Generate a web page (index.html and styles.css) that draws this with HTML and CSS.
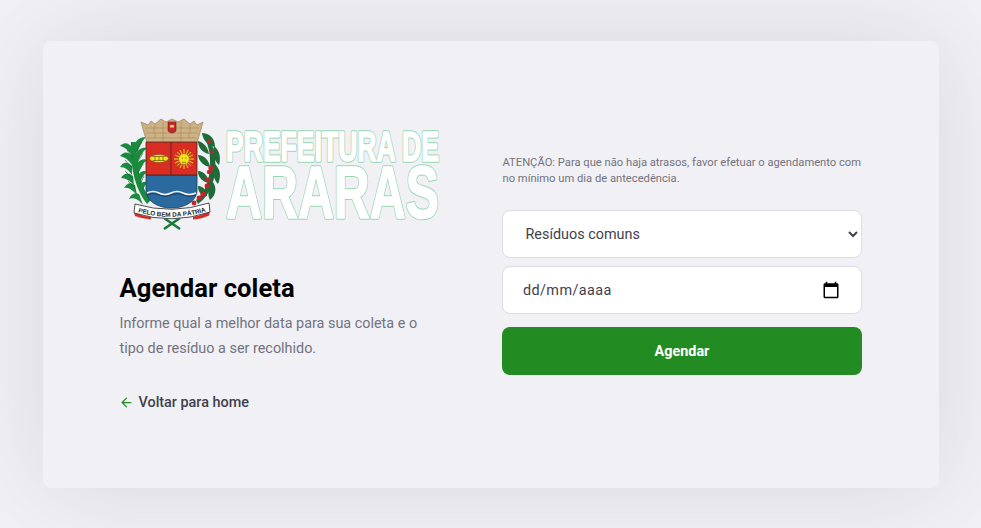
FILE: index.html
```html
<!DOCTYPE html>
<html lang="pt-BR">
<head>
<meta charset="utf-8">
<title>Agendar coleta</title>
<link rel="stylesheet" href="styles.css">
</head>
<body>
<main class="page">
  <div class="card">
    <section class="intro">
      <svg class="logo" viewBox="120 118 320 114" width="320" height="114" role="img" aria-label="Prefeitura de Araras">
        <defs>
          <text id="t1" class="wm wm-top" x="226" y="160.500" textLength="213" lengthAdjust="spacingAndGlyphs">PREFEITURA DE</text>
          <text id="t2" class="wm wm-big" x="226" y="218" textLength="213" lengthAdjust="spacingAndGlyphs">ARARAS</text>
          <path id="bannerCurve" d="M128 209 Q172 225 216 208"/>
        </defs>
        <use href="#t1" class="wm-out"/><use href="#t1" class="wm-in"/>
        <use href="#t2" class="wm-out"/><use href="#t2" class="wm-in"/>

        <!-- sugar cane -->
        <g class="cane">
          <path d="M147 204 C136 190 130 170 131 142 L136 142 C136 168 141 188 151 200Z"/>
          <path d="M133 148 C128 142 124 142 120 146 C125 147 129 151 132 156Z"/>
          <path d="M134 146 C136 140 140 137 146 137 C142 141 139 147 137 153Z"/>
          <path d="M132 156 C127 151 124 152 120 156 C125 157 129 160 132 165Z"/>
          <path d="M135 155 C138 149 142 147 147 148 C142 152 139 158 137 164Z"/>
          <path d="M132 166 C127 161 123 162 120 167 C125 167 129 170 132 175Z"/>
          <path d="M136 165 C139 160 143 158 147 160 C143 163 140 168 138 174Z"/>
          <path d="M133 176 C128 172 124 173 121 178 C126 178 130 181 134 185Z"/>
          <path d="M138 175 C141 171 144 170 147 172 C143 175 141 179 140 184Z"/>
          <path d="M135 185 C130 182 127 183 124 188 C129 187 133 191 137 195Z"/>
          <path d="M140 185 C143 181 145 181 147 183 C144 186 143 190 142 194Z"/>
          <path d="M139 194 C135 192 131 194 129 199 C134 197 139 200 143 205Z"/>
        </g>
        <path class="cane-light" d="M127 150L133 158M142 142L136 152M125 160L132 168M143 153L137 163M125 171L133 179M143 164L138 173M128 181L135 188M144 176L140 184"/>
        <!-- laurel -->
        <g class="laurel">
          <path d="M198 204 C211 195 217 178 215 156 C214 147 210 140 203 134 C207 142 210 150 210 160 C211 176 206 192 196 200Z"/>
          <path d="M202 133 C209 133 215 138 215 147 C209 146 203 141 202 133Z"/>
          <path d="M198 141 C203 142 208 147 209 154 C203 153 198 148 198 141Z"/>
          <path d="M214 146 C220 151 221 158 219 165 C214 161 212 153 214 146Z"/>
          <path d="M198 155 C204 155 209 160 210 167 C204 166 199 162 198 155Z"/>
          <path d="M215 164 C221 170 221 177 218 184 C213 179 212 171 215 164Z"/>
          <path d="M198 171 C204 171 208 176 209 183 C203 182 198 178 198 171Z"/>
          <path d="M213 182 C217 188 216 195 210 200 C207 195 208 187 213 182Z"/>
          <path d="M198 186 C203 186 206 190 207 196 C201 196 198 192 198 186Z"/>
        </g>
        <g class="berries">
          <circle cx="209" cy="142" r="2"/><circle cx="212" cy="152" r="1.800"/>
          <circle cx="211" cy="168" r="2.600"/><circle cx="209" cy="172" r="2.200"/>
          <circle cx="208" cy="180" r="2.400"/><circle cx="207" cy="186" r="2.400"/>
          <circle cx="203" cy="194" r="2.600"/><circle cx="199" cy="198" r="2.400"/>
          <circle cx="194" cy="203" r="2.400"/>
        </g>
        <!-- mural crown -->
        <path class="crown" d="M141 122 L148 125 L151 121 L155 124 L161 119 L166 122 L172 119 L178 122 L184 119 L190 124 L194 121 L197 125 L203 122 L197 143 L147 143Z"/>
        <path class="crown-lines" d="M145 128H199M146 133H198M147 138H197M155 124V128M163 122V143M181 122V143M190 124V128M154 128V133M190 128V133M155 133V138M189 133V138"/>
        <path class="mini-shield" d="M168 122H176V131Q172 135 168 131Z"/>
        <rect class="mini-gold" x="170" y="125" width="4" height="2.500"/>
        <!-- shield -->
        <path class="sh-blue" d="M146 175H197V190C197 201 185 208 171.500 208C158 208 146 201 146 190Z"/>
        <rect class="sh-red" x="146" y="142" width="51" height="33"/>
        <path class="sh-line" d="M171 142V175M146 142H197V175M146 142V175M146 175H197"/>
        <path class="sh-wave-dark" d="M147 195Q153 192 159 195T171 195T183 195T196 195"/>
        <path class="sh-wave" d="M147 193Q153 190 159 193T171 193T183 193T196 193"/>
        <!-- left charge -->
        <ellipse class="gold" cx="159" cy="158.500" rx="9.500" ry="4"/>
        <path class="gold-line" d="M152 156.500H166M152.500 160.500H165.500M155 156V161M159 156V161M163 156V161"/>
        <!-- sun -->
        <path class="sun-rays" d="M184 149V169M174 159H194M177 152L191 166M191 152L177 166M180 150L188 168M188 150L180 168M175 155L193 163M193 155L175 163"/>
        <circle class="gold" cx="184" cy="159" r="5.500"/>
        <path class="gold-line" d="M181.500 158H183M185 158H186.500M182 162Q184 163 186 162"/>
        <!-- stems -->
        <path class="stems" d="M164 229L180 218M180 229L164 218"/>
        <!-- banner -->
        <path class="ribbon-red" d="M134 212Q142 216 151 217L151 219.500Q142 219 135 216ZM210 211Q202 215 193 217L193 219.500Q202 219 209 215.500Z"/>
        <path class="banner" d="M135 204Q172 215 209 203L210 212Q172 225 134 213Z"/>
        <text class="banner-text"><textPath href="#bannerCurve" startOffset="50%">PELO BEM DA PÁTRIA</textPath></text>
      </svg>

      <h1 class="title">Agendar coleta</h1>
      <p class="lead">Informe qual a melhor data para sua coleta e o tipo de resíduo a ser recolhido.</p>
      <a class="back" href="#">
        <svg class="back-icon" viewBox="0 0 24 24" width="15" height="15"><path d="M19 12H5M12 19l-7-7 7-7"/></svg>
        <span>Voltar para home</span>
      </a>
    </section>

    <form class="schedule">
      <p class="notice">ATENÇÃO: Para que não haja atrasos, favor efetuar o agendamento com no mínimo um dia de antecedência.</p>
      <select class="field field-select">
        <option>Resíduos comuns</option>
      </select>
      <label class="field field-date">
        <input class="date-input" type="text" placeholder="dd/mm/aaaa">
        <svg class="date-icon" viewBox="0 0 24 24" width="18" height="18"><path d="M20 3h-1V1h-2v2H7V1H5v2H4c-1.100 0-2 .9-2 2v16c0 1.100.9 2 2 2h16c1.100 0 2-.9 2-2V5c0-1.100-.9-2-2-2zm0 18H4V8h16v13z"/></svg>
      </label>
      <button class="submit" type="button">Agendar</button>
    </form>
  </div>
</main>
</body>
</html>
```
FILE: styles.css
```css
* { margin: 0; padding: 0; box-sizing: border-box; }
html, body { height: 100%; }
body {
  background: #f0f0f5;
  font-family: Roboto, "Liberation Sans", sans-serif;
  overflow: hidden;
}
.page {
  height: 528px;
  display: flex;
  align-items: center;
  justify-content: center;
}
.card {
  width: 896px;
  height: 447px;
  padding: 0 77px;
  background: #f0f0f5;
  border-radius: 8px;
  box-shadow: 0 0 100px rgba(0, 0, 0, .1);
  display: flex;
  align-items: flex-start;
  justify-content: space-between;
}
.intro { width: 320px; padding-top: 77px; }
.logo { display: block; }
.title {
  margin-top: 40px;
  font-size: 25.6px;
  line-height: 32px;
  font-weight: 700;
  letter-spacing: .05px;
  color: #000;
}
.lead {
  margin-top: 7px;
  font-size: 14.4px;
  line-height: 25px;
  color: #737380;
}
.back {
  margin-top: 32px;
  margin-left: -1px;
  display: flex;
  align-items: center;
  gap: 5px;
  font-size: 14.4px;
  font-weight: 500;
  line-height: 20px;
  color: #41414d;
  text-decoration: none;
}
.back-icon { fill: none; stroke: #228b22; stroke-width: 2; stroke-linecap: round; stroke-linejoin: round; }

.schedule { width: 360px; padding-top: 113px; display: flex; flex-direction: column; }
.notice { font-size: 11.2px; line-height: 16px; color: #737380; margin-bottom: 24px; padding: 1px 0 0 1px; height: 32px; }
.field {
  display: block;
  width: 100%;
  height: 48px;
  background: #fff;
  border: 1px solid #dcdce6;
  border-radius: 8px;
  font-family: Roboto, "Liberation Sans", sans-serif;
  font-size: 14.4px;
  color: #41414d;
}
.field-select { padding: 2px 18px 0 19px; }
.field-date {
  margin-top: 8px;
  padding: 2px 21px 0 20.500px;
  display: flex;
  align-items: center;
  justify-content: space-between;
}
.date-input {
  flex: 1;
  min-width: 0;
  border: 0;
  outline: 0;
  background: transparent;
  font: inherit;
  letter-spacing: .4px;
  color: inherit;
}
.date-input::placeholder { color: #41414d; opacity: 1; }
.date-icon { flex: none; fill: #000; margin-top: -2px; }
.submit {
  margin-top: 13px;
  height: 48px;
  padding: 2px 0 0 1px;
  border: 0;
  border-radius: 8px;
  background: #228b22;
  color: #fff;
  font-family: Roboto, "Liberation Sans", sans-serif;
  font-size: 14.4px;
  font-weight: 700;
}

/* logo */
.wm { font-family: "Liberation Sans", sans-serif; font-weight: 700; }
.wm-top { font-size: 43px; }
.wm-big { font-size: 75px; }
.wm-out { fill: #fff; stroke: #98d6b3; stroke-width: 3.600; stroke-linejoin: round; }
.wm-in { fill: #fff; stroke: #fff; stroke-width: 1.600; stroke-linejoin: round; }
.cane { fill: #1b8a3f; }
.cane-light { fill: none; stroke: #0e5c2a; stroke-width: .6; }
.laurel { fill: #1f6b37; }
.berries { fill: #c8202d; }
.crown { fill: #cdb184; stroke: #8f7444; stroke-width: .6; }
.crown-lines { fill: none; stroke: #9a8152; stroke-width: .5; }
.mini-shield { fill: #c9252c; stroke: #5b1a1a; stroke-width: .5; }
.mini-gold { fill: #f0d060; }
.sh-red { fill: #d92d24; }
.sh-blue { fill: #2a6a9f; stroke: #1d3d55; stroke-width: .8; }
.sh-line { fill: none; stroke: #3b2a20; stroke-width: .8; }
.sh-wave { fill: none; stroke: #f5f5f5; stroke-width: 1.400; }
.sh-wave-dark { fill: none; stroke: #1d3d55; stroke-width: 1; }
.gold { fill: #f5e21c; stroke: #5a4a10; stroke-width: .5; }
.gold-line { fill: none; stroke: #5a4a10; stroke-width: .6; }
.sun-rays { stroke: #f5e21c; stroke-width: 1; fill: none; }
.stems { fill: none; stroke: #1b7a38; stroke-width: 2.600; }
.banner { fill: #fff; stroke: #222; stroke-width: .8; }
.ribbon-red { fill: #d92d24; }
.banner-text { font-family: "Liberation Sans", sans-serif; font-size: 6.300px; font-weight: 700; fill: #222; text-anchor: middle; }
```
